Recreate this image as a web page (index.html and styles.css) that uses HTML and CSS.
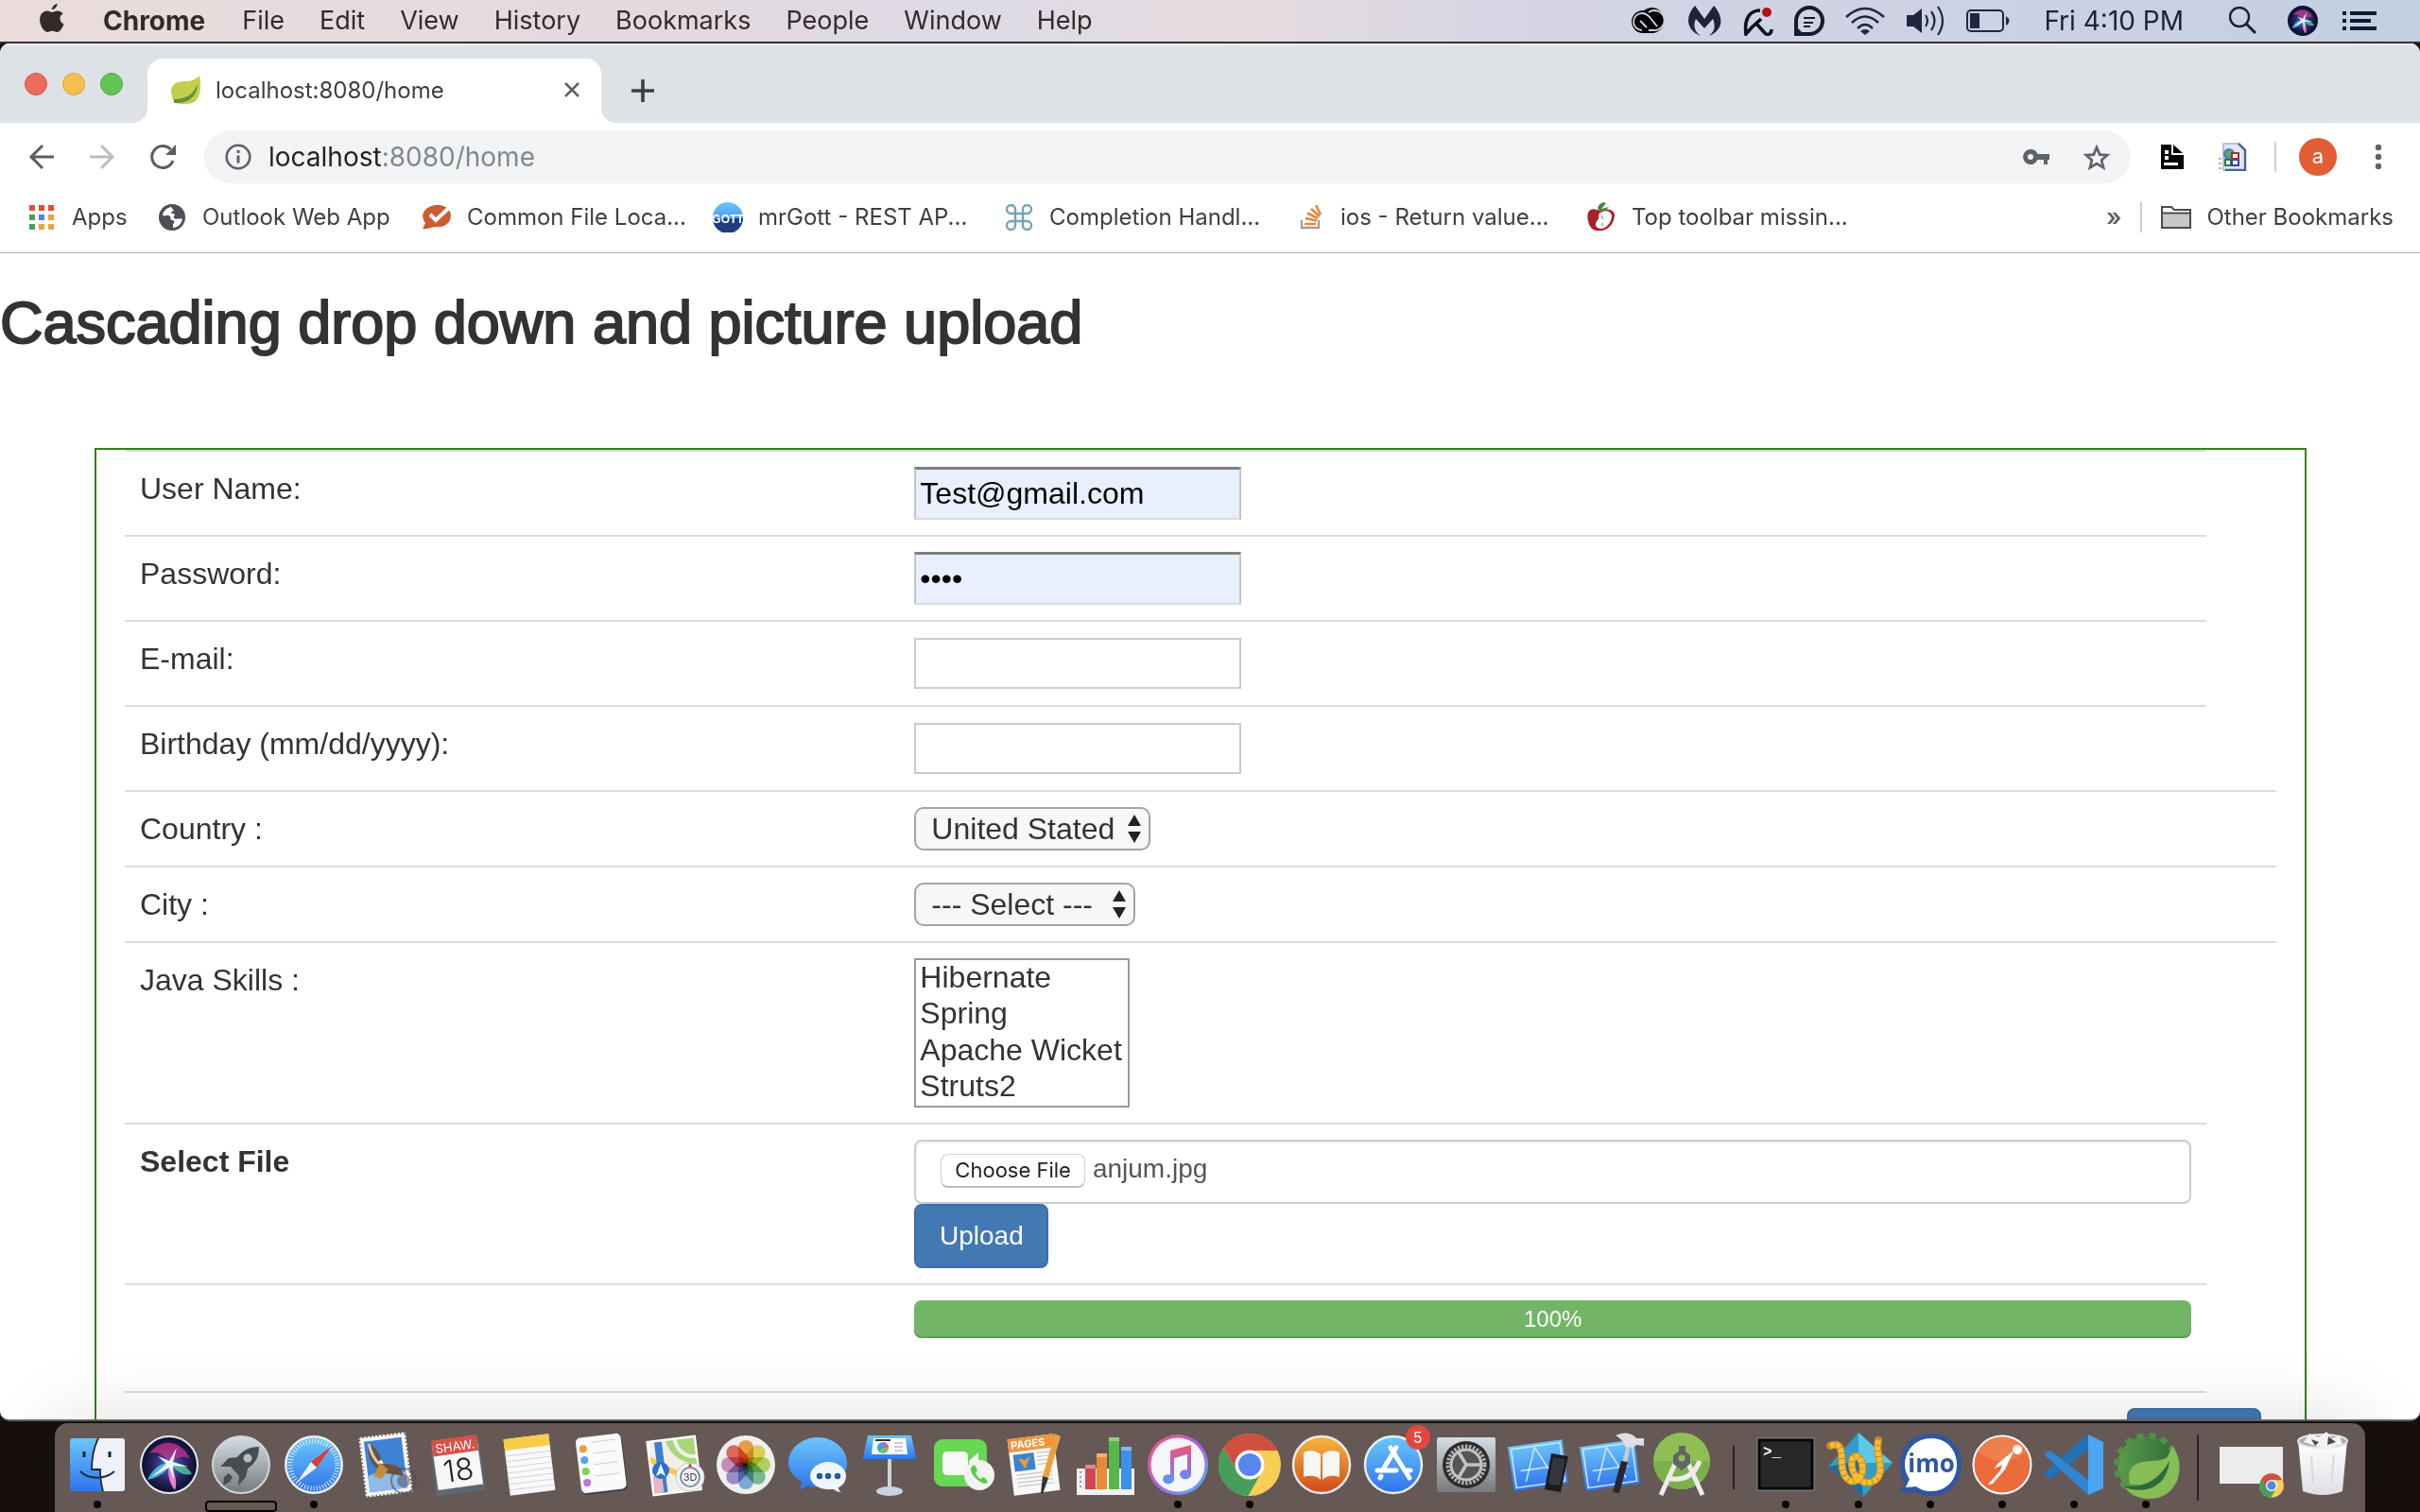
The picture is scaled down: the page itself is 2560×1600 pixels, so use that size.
FILE: index.html
```
<!DOCTYPE html>
<html lang="en">
<head>
<meta charset="utf-8">
<title>localhost:8080/home</title>
<link rel="stylesheet" href="styles.css">
</head>
<body>
<svg width="0" height="0" class="defs" aria-hidden="true">
  <defs>
    <symbol id="chrome-logo" viewBox="0 0 72 72">
      <circle cx="36" cy="36" r="33" fill="#f8ce55"/>
      <path d="M65.400 21A33 33 0 0 0 8.300 18L23 43.500 36 36V21z" fill="#d0503f"/>
      <path d="M8.300 18A33 33 0 0 0 34.300 69L49 43.500 36 36 23 43.500z" fill="#479e5c"/>
      <circle cx="36" cy="36" r="15.500" fill="#fff"/><circle cx="36" cy="36" r="12" fill="#5686ee"/>
    </symbol>
    <symbol id="siri-orb" viewBox="0 0 72 72">
      <circle cx="36" cy="36" r="31" fill="#e8e8ee"/>
      <circle cx="36" cy="36" r="29" fill="url(#siri-bg)"/>
      <path d="M15 24C26 8 48 8 58 30 48 24 42 30 37 36 32 28 26 20 15 24z" fill="#c8358e" opacity=".75"/>
      <path d="M13 52C18 40 28 33 37 34 34 44 24 50 13 52z" fill="#4fc8e8" opacity=".85"/>
      <path d="M37 34C48 34 56 38 60 46 50 48 42 42 37 34z" fill="#4ecf9f" opacity=".8"/>
      <path d="M36 34C42 44 45 54 42 63 35 54 34 44 36 34z" fill="#ee7fd0"/>
      <path d="M24 27L36 32 44 18 40 33 56 38 40 37 41 52 36 39 17 49 33 35z" fill="#e9fbff"/>
    </symbol>
    <radialGradient id="siri-bg"><stop offset="0" stop-color="#4a6fd8"/><stop offset=".6" stop-color="#2a2560"/><stop offset="1" stop-color="#0b1030"/></radialGradient>
    <linearGradient id="sky" x2="0" y2="1"><stop offset="0" stop-color="#6cc6fa"/><stop offset="1" stop-color="#2f74ec"/></linearGradient>
    <linearGradient id="steel" x2="0" y2="1"><stop offset="0" stop-color="#d3dfe4"/><stop offset="1" stop-color="#77797b"/></linearGradient>
    <linearGradient id="orange" x2="0" y2="1"><stop offset="0" stop-color="#f8b73c"/><stop offset="1" stop-color="#cf4a1e"/></linearGradient>
    <linearGradient id="paper" x2="0" y2="1"><stop offset="0" stop-color="#fff"/><stop offset="1" stop-color="#dfe0e4"/></linearGradient>
    <linearGradient id="tune" x2="1" y2="1"><stop offset="0" stop-color="#f25a66"/><stop offset=".5" stop-color="#b35be8"/><stop offset="1" stop-color="#3fc4f6"/></linearGradient>
    <linearGradient id="note" x2="0" y2="1"><stop offset="0" stop-color="#f0566a"/><stop offset=".6" stop-color="#9a6be8"/><stop offset="1" stop-color="#4aa0f2"/></linearGradient>
    <linearGradient id="leaf" x2="1" y2="0"><stop offset="0" stop-color="#5a9d4c"/><stop offset="1" stop-color="#2f6c39"/></linearGradient>
  </defs>
</svg>

<header class="menubar">
  <nav class="menus" aria-label="Application menu">
    <button class="menu apple" aria-label="Apple"><svg width="26" height="32" viewBox="0 0 26 32"><path fill="currentColor" d="M18.500 0c.300 2.400-2.300 6.300-5.600 6.200C12.600 3.500 15.500.500 18.500 0zM13 9c1.400 0 3-1.500 5.800-1.500 2.600.1 4.500 1.300 5.700 3-4.600 2.800-3.700 9 1 10.900-1.300 3.700-4.100 8.500-7 8.500-2 0-2.700-1.100-5.200-1.100s-3.400 1.100-5.200 1.100C4.600 29.900.200 22.900.100 17 .100 11 3.800 7.700 7.700 7.600 10 7.600 12 9 13 9z"/></svg></button>
    <button class="menu app-name">Chrome</button>
    <button class="menu">File</button>
    <button class="menu">Edit</button>
    <button class="menu">View</button>
    <button class="menu">History</button>
    <button class="menu">Bookmarks</button>
    <button class="menu">People</button>
    <button class="menu">Window</button>
    <button class="menu">Help</button>
  </nav>
  <div class="status">
    <svg width="38" height="28" viewBox="0 0 38 28"><path d="M13 27a12 12 0 1 1 2-24A13.500 13.500 0 1 1 25 27z" fill="#050507"/><path d="M13 24a9 9 0 1 1 0-18c4 0 6 2 8 4l8 10M18 21l-7-7" fill="none" stroke="#d3d4e4" stroke-width="1.800"/><path d="M20 5a10.500 10.500 0 1 1 5 19h-5" fill="none" stroke="#d3d4e4" stroke-width="1.800"/></svg>
    <svg width="38" height="32" viewBox="0 0 38 32"><path fill="#20233a" d="M9 0l10 14L29 0c11 12 10 26-5 32 6-5 7-11 4-18l-9 10-9-10c-3 7-2 13 5 18C0 26-2 12 9 0z"/></svg>
    <svg width="32" height="32" viewBox="0 0 32 32"><path d="M18 5C6 5 1 15 3 30l7-8M19 14L8 24M14 19l9 10c3 3 7 1 7-4" fill="none" stroke="#0d1020" stroke-width="3.600"/><circle cx="25" cy="7" r="5" fill="#b3120f"/></svg>
    <svg width="32" height="32" viewBox="0 0 32 32"><path d="M2 30V16A14 14 0 1 1 16 30z" fill="none" stroke="#141b2c" stroke-width="4"/><path d="M10 13h12M10 18h10M10 22h7" stroke="#141b2c" stroke-width="2"/><path d="M0 32V20l12 12z" fill="#141b2c"/></svg>
    <svg width="42" height="30" viewBox="0 0 42 30"><g fill="none" stroke="#1f2740" stroke-width="2.500"><path d="M1 11Q21-7 41 11"/><path d="M7 17Q21 4 35 17"/><path d="M13 23Q21 15 29 23"/></g><path d="M16 26q5-4 10 0l-5 4z" fill="#1f2740"/></svg>
    <svg width="42" height="32" viewBox="0 0 42 32"><path d="M1 10h7l9-7v26l-9-7H1z" fill="#1f2740"/><path d="M21 10q4 6 0 12M27 6q7 10 0 20M34 1q10 15 0 30" fill="none" stroke="#1f2740" stroke-width="2.200"/></svg>
    <svg width="46" height="24" viewBox="0 0 46 24"><rect x="1" y="1" width="38" height="22" rx="4" fill="none" stroke="#1f2740" stroke-width="2"/><path d="M4 4h10v16H4z" fill="#1f2740"/><path d="M42 7q7 5 0 10z" fill="#1f2740"/></svg>
  </div>
  <time class="clock">Fri 4:10 PM</time>
  <div class="status corner">
    <svg width="36" height="30" viewBox="0 0 36 30"><circle cx="11" cy="11" r="10" fill="none" stroke="#17203a" stroke-width="2.400"/><path d="M18 18l10 10" stroke="#17203a" stroke-width="3"/></svg>
    <svg width="32" height="32" viewBox="4 4 64 64"><use href="#siri-orb" width="72" height="72"/><circle cx="36" cy="36" r="29.500" fill="none" stroke="#0c1230" stroke-width="5"/></svg>
    <svg width="36" height="20" viewBox="0 0 36 20"><path d="M0 2h4M8 2h28M0 10h4M8 10h22M0 18h4M8 18h28" stroke="#101a30" stroke-width="4"/></svg>
  </div>
</header>

<section class="window">
  <div class="tabstrip">
    <div class="lights"><button class="light red" aria-label="Close window"></button><button class="light amber" aria-label="Minimize"></button><button class="light green" aria-label="Zoom"></button></div>
    <div class="tab">
      <svg width="32" height="32" viewBox="0 0 32 32"><path d="M31 1c3 16 0 30-13 30-5 1-9-1-13-1C-2 17 0 8 14 7c9 0 13-2 17-6z" fill="#c3cf4a"/><path d="M4 26C17 26 24 21 29 10 29 22 20 31 4 30z" fill="#5f9440"/></svg>
      <span class="tab-title">localhost:8080/home</span>
      <button class="icon-button close" aria-label="Close tab"><svg width="18" height="18" viewBox="0 0 18 18"><path d="M2 2l14 14M16 2L2 16" stroke="#5f6368" stroke-width="2.600"/></svg></button>
    </div>
    <button class="icon-button new-tab" aria-label="New tab"><svg width="26" height="26" viewBox="0 0 26 26"><path d="M13 1v24M1 13h24" stroke="#3c4043" stroke-width="3.600"/></svg></button>
  </div>

  <div class="toolbar">
    <button class="icon-button" aria-label="Back"><svg width="28" height="28" viewBox="0 0 28 28"><path d="M27 14H3M15 2L3 14l12 12" fill="none" stroke="#5a5e63" stroke-width="3"/></svg></button>
    <button class="icon-button" aria-label="Forward"><svg width="28" height="28" viewBox="0 0 28 28"><path d="M1 14h24M13 2l12 12-12 12" fill="none" stroke="#bbbdbf" stroke-width="3"/></svg></button>
    <button class="icon-button" aria-label="Reload"><svg width="28" height="28" viewBox="0 0 28 28"><path d="M25 18A11.500 11.500 0 1 1 22.500 6" fill="none" stroke="#5a5e63" stroke-width="3"/><path d="M28 1v11H17z" fill="#5a5e63"/></svg></button>
    <div class="omnibox">
      <svg width="28" height="28" viewBox="0 0 28 28"><circle cx="14" cy="14" r="12.300" fill="none" stroke="#5f6368" stroke-width="2.600"/><path d="M14 7v3M14 12.500v8" stroke="#5f6368" stroke-width="3"/></svg>
      <input class="url" type="text" value="localhost:8080/home" aria-label="Address">
      <button class="icon-button" aria-label="Saved passwords"><svg width="28" height="18" viewBox="0 0 28 18"><path d="M8 1a8 8 0 1 0 7.500 11H22v5h4v-5h2V6H15.500A8 8 0 0 0 8 1zm0 5a3 3 0 1 1 0 6 3 3 0 0 1 0-6z" fill="#5f6368" fill-rule="evenodd"/></svg></button>
      <button class="icon-button" aria-label="Bookmark this page"><svg width="30" height="28" viewBox="0 0 30 28"><path d="M15 4l3.200 7.600 8 .6-6.100 5.200 2 8L15 21l-7.100 4.400 2-8-6.100-5.200 8-.6z" fill="none" stroke="#5f6368" stroke-width="2.700"/></svg></button>
    </div>
    <button class="icon-button" aria-label="Page extension"><svg width="24" height="26" viewBox="0 0 24 26"><path d="M0 0h11v11h13v15H0z" fill="#000"/><path d="M13 0l10 9H13z" fill="#000"/><path d="M4 6h4v4H4zM4 12h4v4H4zM3 19h15v3H3z" fill="#fff"/></svg></button>
    <button class="icon-button" aria-label="Web extension"><svg width="30" height="30" viewBox="0 0 30 30"><path d="M5 1h17l6 6v22H5z" fill="#dfe8f6" stroke="#9fb3d0" stroke-width="1.500"/><path d="M21 1l7 7v21H7" fill="none" stroke="#45658f" stroke-width="2.400"/><circle cx="11" cy="12" r="6" fill="#3b7dd0"/><path d="M6 10l5 7 5-10z" fill="#55b34a"/><path d="M7 18h6v6H7z" fill="#fff" stroke="#2f7d3c" stroke-width="2"/><path d="M14 18h7v6h-7z" fill="#fff" stroke="#3c3f9d" stroke-width="2"/><path d="M14 11h7v6h-7z" fill="#fff" stroke="#a82c38" stroke-width="2"/><path d="M0 17h3M0 22h3M0 27h3" stroke="#b9b67d" stroke-width="2"/></svg></button>
    <span class="divider"></span>
    <button class="icon-button" aria-label="Profile"><span class="avatar">a</span></button>
    <button class="icon-button" aria-label="More"><svg width="8" height="28" viewBox="0 0 8 28"><g fill="#5f6368"><circle cx="4" cy="4" r="3.200"/><circle cx="4" cy="14" r="3.200"/><circle cx="4" cy="24" r="3.200"/></g></svg></button>
  </div>

  <nav class="bookmarks" aria-label="Bookmarks">
    <a class="bookmark" href="#"><svg width="34" height="26" viewBox="-4 0 34 26"><path d="M1 0h6v6H1zM11 0h6v6h-6zM21 0h6v6h-6z" fill="#e44b3f"/><path d="M1 10h6v6H1zM1 20h6v6H1z" fill="#529b5c"/><path d="M11 10h6v6h-6z" fill="#4587f0"/><path d="M21 10h6v6h-6zM11 20h6v6h-6zM21 20h6v6h-6z" fill="#e7a53c"/></svg>Apps</a>
    <a class="bookmark" href="#"><svg width="32" height="28" viewBox="0 0 32 28"><circle cx="16" cy="14" r="14" fill="#4c4f55"/><path d="M15 3c-5 1-9 5-9 9 3 1 6-1 8 1 1 2-1 3 2 4 3 0 3 3 1 4v4c5 0 9-4 10-9-2-2-6 1-9-1-1-2 2-4 0-5-4 1-3-3 0-3z" fill="#fff"/></svg>Outlook Web App</a>
    <a class="bookmark" href="#"><svg width="32" height="26" viewBox="0 0 32 26"><path d="M15 0c8-1 16 4 16 11 0 8-7 13-15 12-5 0-8 3-15 2l3-6C-3 10 4 1 15 0z" fill="#cb5d33"/><path d="M9 10l6 6L31 1" fill="none" stroke="#fff" stroke-width="4"/></svg>Common File Loca...</a>
    <a class="bookmark" href="#"><svg width="32" height="32" viewBox="0 0 32 32"><circle cx="16" cy="16" r="16" fill="url(#sky)"/><path d="M0 17h32a16 16 0 0 1-32 0z" fill="#1f3f7c"/><text x="16" y="22" class="gott" text-anchor="middle">GOTT</text></svg>mrGott - REST AP...</a>
    <a class="bookmark" href="#"><svg width="32" height="28" viewBox="0 0 32 28"><path d="M12 9v10M20 9v10M11 10h10M11 18h10M12 10V5.500a4.500 4.500 0 1 0-4.500 4.500H12M20 10V5.500a4.500 4.500 0 1 1 4.500 4.500H20M12 18v4.500A4.500 4.500 0 1 1 7.500 18H12M20 18v4.500a4.500 4.500 0 1 0 4.500-4.500H20" fill="none" stroke="#76a3b7" stroke-width="2.400"/></svg>Completion Handl...</a>
    <a class="bookmark" href="#"><svg width="32" height="26" viewBox="0 0 32 26"><path d="M7 16v8h18v-8" fill="none" stroke="#9c9ea1" stroke-width="2.400"/><path d="M10 20h12M11 14l12 2.500M13 8.500l11 5.500M17 4l9 8M22 0l5 10" stroke="#e8853c" stroke-width="2.600"/></svg>ios - Return value...</a>
    <a class="bookmark" href="#"><svg width="32" height="32" viewBox="0 0 32 32"><path d="M11 8C3 5 0 12 2 20s6 10 10 10c8 1 17-4 18-16 0-4-4-7-9-6-3 0-6 1-10 0z" fill="#a82226"/><path d="M15 11c5-3 11-2 12 3 0 7-5 13-11 14-6 0-8-5-4-9 3-3-1-5 3-8z" fill="#fff"/><path d="M12 7c1-6 6-8 9-6l-5 6 8-2c-2 4-8 5-12 2z" fill="#3c8a3e"/><path d="M17 14v4M17 22v3" stroke="#bbb" stroke-width="2"/></svg>Top toolbar missin...</a>
    <span></span>
    <button class="more" aria-label="More bookmarks">»</button>
    <a class="bookmark other" href="#"><svg width="32" height="26" viewBox="0 0 32 26"><path d="M1 24V2h10l3 3h17v19z" fill="#fff" stroke="#4b4b4b" stroke-width="2"/><path d="M1 8.500h30V24H1z" fill="#c8c8c8" stroke="#4b4b4b" stroke-width="2"/></svg>Other Bookmarks</a>
  </nav>

  <main class="page">
    <h1>Cascading drop down and picture upload</h1>
    <form class="panel" onsubmit="return false">
      <table>
        <colgroup><col class="col-label"><col><col class="col-end"></colgroup>
        <tr><td><label for="user">User Name:</label></td><td><input class="field filled" id="user" type="text" value="Test@gmail.com"></td></tr>
        <tr><td><label for="pass">Password:</label></td><td><input class="field filled" id="pass" type="password" value="test"></td></tr>
        <tr><td><label for="mail">E-mail:</label></td><td><input class="field" id="mail" type="text"></td></tr>
        <tr><td><label for="bday">Birthday (mm/dd/yyyy):</label></td><td><input class="field" id="bday" type="text"></td></tr>
        <tr><td><label for="country">Country :</label></td><td><span class="picker"><select id="country" class="country"><option>United Stated</option></select><svg class="arrows" width="16" height="30" viewBox="0 0 16 30"><path d="M8 0l7 12H1zM8 30l7-12H1z" fill="#222"/></svg></span></td><td></td></tr>
        <tr><td><label for="city">City :</label></td><td><span class="picker"><select id="city" class="city"><option>--- Select ---</option></select><svg class="arrows" width="16" height="30" viewBox="0 0 16 30"><path d="M8 0l7 12H1zM8 30l7-12H1z" fill="#222"/></svg></span></td><td></td></tr>
        <tr><td><label for="skills">Java Skills :</label></td><td><select id="skills" class="skills" multiple size="4"><option>Hibernate</option><option>Spring</option><option>Apache Wicket</option><option>Struts2</option></select></td><td></td></tr>
        <tr><td><label for="file" class="strong">Select File</label></td><td><input class="file" id="file" type="file"><button class="primary" type="button">Upload</button></td></tr>
        <tr class="last"><td></td><td><div class="progress" role="progressbar" aria-valuenow="100">100%</div></td></tr>
        <tr class="actions"><td colspan="3"><button class="primary submit" aria-label="Submit"></button></td></tr>
      </table>
    </form>
  </main>
</section>

<footer class="dock">
  <div class="app on"><svg viewBox="0 0 72 72"><rect x="7" y="8" width="58" height="56" rx="3" fill="url(#sky)"/><path d="M37 8h25a3 3 0 0 1 3 3v50a3 3 0 0 1-3 3H42c-2-6-2-12-2-16l-1-7h-9c0-12 2-23 7-33z" fill="#eef1f6"/><path d="M22 22v6M49 22v6" stroke="#16222e" stroke-width="3"/><path d="M18 43c9 9 26 9 36 0M37 8c-5 10-7 21-7 33h9c0 8 1 16 3 23" fill="none" stroke="#1a2a3c" stroke-width="1.800"/></svg></div>
  <div class="app"><svg viewBox="0 0 72 72"><use href="#siri-orb"/></svg></div>
  <div class="app launch"><svg viewBox="0 0 72 72"><circle cx="36" cy="36" r="30" fill="url(#steel)" stroke="#cfd5d8" stroke-width="2"/><path d="M55 17c-11 0-17 4-23 11l-9 1-9 9 11 0 9 10-1 10 8-9 2-9c8-6 12-12 12-23zM23 45l-5 4-1 9 7-4 3-5z" fill="#474c50"/><circle cx="43" cy="29" r="4.500" fill="#b5bdc1"/></svg></div>
  <div class="app on"><svg viewBox="0 0 72 72"><circle cx="36" cy="36" r="31" fill="#eceff1"/><circle cx="36" cy="36" r="28.500" fill="url(#sky)"/><circle cx="36" cy="36" r="25" fill="none" stroke="#e8f3fc" stroke-width="5" stroke-dasharray="1 2.200"/><path d="M55 16L33 33l6 6z" fill="#de3b32"/><path d="M18 55l15-22 6 6z" fill="#f1f1f1"/></svg></div>
  <div class="app"><svg viewBox="0 0 72 72"><g transform="rotate(-7 36 36)"><path d="M11 4h50v64H11z" fill="#f7f7f7"/><path d="M11 4h50v64H11z" fill="none" stroke="#655855" stroke-width="3" stroke-dasharray="1.500 2.500"/><path d="M16 9h40v54H16z" fill="#3f82d4"/><path d="M16 46c10-5 26-2 40 0v17H16z" fill="#8fbbe6"/><path d="M21 12c-4 10-1 20 6 27l8 6 18 5c1-7-4-12-12-14l-9-2c0-10-4-18-11-22z" fill="#6b5340"/><path d="M21 12c1 10 4 17 8 22" fill="none" stroke="#d9cbb8" stroke-width="3"/><path d="M30 33l-8 14 8 3 8-9z" fill="#c98a35"/><path d="M28 33l4-3 2 5z" fill="#fff"/></g><circle cx="55" cy="53" r="13" fill="none" stroke="#4d4a58" stroke-width="2" opacity=".6"/><circle cx="55" cy="53" r="7" fill="#4d4a58" opacity=".5"/></svg></div>
  <div class="app"><svg viewBox="0 0 72 72"><g transform="rotate(-8 36 36)"><path d="M10 14h52v52H9z" fill="#5c6972"/><path d="M12 10h48v50H12z" fill="#f7f7f7"/><path d="M12 7h48v17H12z" fill="#da4f48"/><text x="36" y="21" class="cal-month" text-anchor="middle">SHAW.</text><text x="36" y="53" class="cal-day" text-anchor="middle">18</text></g></svg></div>
  <div class="app"><svg viewBox="0 0 72 72"><g transform="rotate(-7 36 36)"><path d="M12 6h48v60H12z" fill="#fafafa"/><path d="M12 6h48v12H12z" fill="#f8cd45"/><path d="M12 24h48M12 30h48M12 36h48M12 42h48M12 48h48M12 54h48M12 60h48" stroke="#d3d3d3"/></g></svg></div>
  <div class="app"><svg viewBox="0 0 72 72"><g transform="rotate(-7 36 36)"><rect x="13" y="7" width="48" height="59" rx="5" fill="#3e4349"/><rect x="12" y="5" width="48" height="59" rx="5" fill="#fafafa"/><circle cx="19" cy="17" r="4" fill="#f09a38"/><circle cx="19" cy="29" r="4" fill="#4aa7f0"/><circle cx="19" cy="41" r="4" fill="#79d354"/><circle cx="19" cy="53" r="4" fill="#bd74d8"/><path d="M29 11h25M29 23h25M29 35h25M29 47h25" stroke="#cfcfcf"/></g></svg></div>
  <div class="app"><svg viewBox="0 0 72 72"><g transform="rotate(-7 36 36)"><path d="M11 9h50v56H11z" fill="#f2efe9" stroke="#fff" stroke-width="3"/><path d="M30 10h30v28Q36 34 30 10z" fill="#a6d77b"/><path d="M40 10q2 18 20 20" fill="none" stroke="#f2efe9" stroke-width="4"/><path d="M12 24l15 12 30 16v9L12 32z" fill="#f5c94a"/><path d="M18 10h8v54h-8z" fill="#3a80d2"/><path d="M12 46h10v18H12z" fill="#eab6bf"/></g><circle cx="22" cy="42" r="9" fill="#2772cc"/><path d="M22 35l5 13-5-3-5 3z" fill="#fff"/><circle cx="53" cy="49" r="15" fill="#f2f2f2" stroke="#c9c9c9"/><circle cx="53" cy="49" r="10" fill="none" stroke="#5b7f98" stroke-width="1.500"/><text x="53" y="53" class="three-d" text-anchor="middle">3D</text><path d="M53 34l2 4h-4z" fill="#d33"/></svg></div>
  <div class="app"><svg viewBox="0 0 72 72"><circle cx="36" cy="36" r="31" fill="#efefef"/><g class="petals"><rect x="28" y="10" width="16" height="27" rx="8" fill="#f0a13c"/><rect x="28" y="10" width="16" height="27" rx="8" fill="#e8da47" transform="rotate(45 36 36)"/><rect x="28" y="10" width="16" height="27" rx="8" fill="#b5d65c" transform="rotate(90 36 36)"/><rect x="28" y="10" width="16" height="27" rx="8" fill="#74c08c" transform="rotate(135 36 36)"/><rect x="28" y="10" width="16" height="27" rx="8" fill="#76acdf" transform="rotate(180 36 36)"/><rect x="28" y="10" width="16" height="27" rx="8" fill="#9a8ccb" transform="rotate(225 36 36)"/><rect x="28" y="10" width="16" height="27" rx="8" fill="#cb8cb9" transform="rotate(270 36 36)"/><rect x="28" y="10" width="16" height="27" rx="8" fill="#e8604e" transform="rotate(315 36 36)"/></g></svg></div>
  <div class="app"><svg viewBox="0 0 72 72"><path d="M36 7c17 0 31 12 31 27S53 60 36 60c-4 0-8-1-11-2-3 3-6 4-9 4 2-2 3-5 3-8C10 49 5 42 5 34 5 19 19 7 36 7z" fill="url(#sky)"/><path d="M47 33c11 0 19 7 19 15 0 5-3 10-8 12 0 2 1 4 3 5-3 0-6-1-8-3h-6c-10 0-19-6-19-14s9-15 19-15z" fill="#eef5fb"/><g fill="#2559a0"><circle cx="38" cy="48" r="3.200"/><circle cx="47" cy="48" r="3.200"/><circle cx="57" cy="48" r="3.200"/></g></svg></div>
  <div class="app"><svg viewBox="0 0 72 72"><path d="M34 30h4v34h-4z" fill="#cfd4da"/><ellipse cx="36" cy="64" rx="14" ry="5" fill="#c9d3e2"/><path d="M13 5h46l5 23v2H8v-2z" fill="url(#sky)"/><path d="M19 8h34l2 17H17z" fill="#fff"/><path d="M21 10h16" stroke="#333" stroke-width="2"/><circle cx="29" cy="18" r="6" fill="#39a7de"/><path d="M29 18v-6a6 6 0 0 1 6 6z" fill="#d95bb2"/><path d="M29 18h6a6 6 0 0 1-10 4z" fill="#79c44c"/><path d="M41 13h9M41 17h9M41 21h9" stroke="#bbc" stroke-width="1.500"/></svg></div>
  <div class="app"><svg viewBox="0 0 72 72"><rect x="7" y="9" width="56" height="50" rx="9" fill="#66d852"/><rect x="16" y="22" width="27" height="25" rx="5" fill="#f7f9f7"/><path d="M44 32l10-9v22H44z" fill="#f7f9f7"/><circle cx="55" cy="47" r="16" fill="#f0f3ef"/><path d="M47 38c-3 3 1 10 6 14s9 5 11 2l-4-5-4 2c-3-2-4-4-5-7l2-2-3-6z" fill="#58cc48"/></svg></div>
  <div class="app"><svg viewBox="0 0 72 72"><g transform="rotate(-7 36 36)"><path d="M11 6h49v60H11z" fill="#f8f8f8"/><path d="M11 6h49v14H11z" fill="#f0953a"/><text x="14" y="17" class="pages">PAGES</text><path d="M15 23h22v18H15z" fill="#3d83cf"/><path d="M20 27l6 12 7-13-6 4z" fill="#f29a2e"/><path d="M40 24h16M40 28h16M40 32h16M40 36h16M16 45h38M16 49h38M16 53h38M16 57h38" stroke="#bbb"/></g><path d="M58 3l6 3-13 44-6-2z" fill="#eaa13a"/><path d="M45 48l6 2-6 17-2-1z" fill="#333"/></svg></div>
  <div class="app"><svg viewBox="0 0 72 72"><path d="M5 40h61v28H5z" fill="#f1f1f1"/><path d="M9 43v20" stroke="#999" stroke-width="2" stroke-dasharray="2 3"/><path d="M14 36h11v26H14z" fill="#d44552"/><path d="M26 24h11v38H26z" fill="#ea8a36"/><path d="M39 7h11v55H39z" fill="#56b947"/><path d="M52 17h11v45H52z" fill="#3c91ee"/><path d="M14 36h11v4H14zM26 24h11v4H26zM39 7h11v4H39zM52 17h11v4H52z" fill="#fff" opacity=".35"/></svg></div>
  <div class="app on"><svg viewBox="0 0 72 72"><circle cx="36" cy="36" r="32" fill="url(#tune)"/><circle cx="36" cy="36" r="28.500" fill="#f6f5fa"/><path d="M28 21l22-6v31a6 5 0 1 1-4-4.500V25l-14 4v22a6 5 0 1 1-4-4.500z" fill="url(#note)"/></svg></div>
  <div class="app on"><svg viewBox="0 0 72 72"><use href="#chrome-logo"/></svg></div>
  <div class="app"><svg viewBox="0 0 72 72"><circle cx="36" cy="36" r="30" fill="url(#orange)" stroke="#eceae8" stroke-width="2.500"/><path d="M35 25c-4-4-12-5-18-2v26c6-2 14-2 18 3zM37 25c4-4 12-5 18-2v26c-6-2-14-2-18 3z" fill="#f8f6f3"/></svg></div>
  <div class="app"><svg viewBox="0 0 72 72"><circle cx="36" cy="36" r="30" fill="url(#sky)" stroke="#e9eef3" stroke-width="2.500"/><path d="M39 18L25 41M33 18l20 32M19 42h20M48 42h6M23 48l-1 2" stroke="#fff" stroke-width="5" stroke-linecap="round"/></svg><span class="badge">5</span></div>
  <div class="app"><svg viewBox="0 0 72 72"><rect x="5" y="7" width="62" height="58" rx="2" fill="url(#steel)"/><circle cx="36" cy="36" r="25" fill="#2c2c2e"/><circle cx="36" cy="36" r="19.500" fill="none" stroke="#b2b2b2" stroke-width="4" stroke-dasharray="2.500 1.600"/><circle cx="36" cy="36" r="16" fill="#555" stroke="#c3c3c3" stroke-width="3"/><path d="M36 36h17M36 36l-9-15M36 36l-9 15" stroke="#c3c3c3" stroke-width="3.500"/></svg></div>
  <div class="app"><svg viewBox="0 0 72 72"><g transform="rotate(-8 36 36)"><path d="M7 13h58v47H7z" fill="url(#sky)"/><path d="M10 16h52v41H10zM35 17L21 52M35 17l16 35M17 40h38" fill="none" stroke="#cfe8fb" stroke-width="1.500"/></g><path d="M50 24l18 3-8 38-17-3z" fill="#1b1c20"/><path d="M52 28l13 2-6 28-12-2z" fill="#33363d"/></svg></div>
  <div class="app"><svg viewBox="0 0 72 72"><g transform="rotate(-8 36 36)"><path d="M7 13h58v47H7z" fill="url(#sky)"/><path d="M10 16h52v41H10zM35 17L21 52M35 17l16 35M17 40h38" fill="none" stroke="#cfe8fb" stroke-width="1.500"/></g><path d="M54 14l4 1-4 20-5-1z" fill="#c6cbd1"/><path d="M48 32l7 1-9 33-7-1z" fill="#26282c"/><path d="M42 5c9-4 15-3 20 1l2 2 8 0v8l-8-1-4 3-8-1c-1-6-5-9-10-12z" fill="#dde1e6"/></svg></div>
  <div class="app"><svg viewBox="0 0 72 72"><circle cx="36" cy="32" r="30" fill="#8fbe55"/><path d="M6 32a30 30 0 0 0 60 0z" fill="#7db04a"/><path d="M33 26L14 68M39 26l19 42" stroke="#ececec" stroke-width="5"/><path d="M20 50q26 6 35-18" fill="none" stroke="#ececec" stroke-width="5"/><path d="M33 16h7v6l5 4v9l-9 7-9-7v-9l6-4z" fill="#5f6569"/><circle cx="36" cy="29" r="3.500" fill="#8fbe55"/></svg></div>
  <span class="rule short"></span>
  <div class="app on"><svg viewBox="0 0 72 72"><path d="M6 8h60v55H6z" fill="#262829" stroke="#7c8587" stroke-width="1.500"/><path d="M8 10h56v51H8z" fill="none" stroke="#0a0a0a" stroke-width="3"/><text x="12" y="27" class="prompt">&gt;_</text></svg></div>
  <div class="app on"><svg viewBox="0 0 72 72"><path d="M36 2l36 32-31 36L4 38z" fill="#2f9dc9"/><path d="M36 2l36 32H36z" fill="#58c9e8"/><path d="M4 38l32-6 5 38z" fill="#1d6d9b"/><path d="M6 16c16-6 11 14 13 24s9 18 17 11 4-24-3-24-5 19 4 25 21 2 22-10-5-20-2-32" fill="none" stroke="#c98a1c" stroke-width="8" stroke-linecap="round"/><path d="M6 16c16-6 11 14 13 24s9 18 17 11 4-24-3-24-5 19 4 25 21 2 22-10-5-20-2-32" fill="none" stroke="#f6bd38" stroke-width="6" stroke-dasharray="5 1"/></svg></div>
  <div class="app on"><svg viewBox="0 0 72 72"><path d="M37 3c19 0 32 14 32 33S56 69 37 69c-6 0-12-1-17-4-6 1-11 1-17-1 3-2 6-5 6-9-3-5-5-11-5-19C4 17 18 3 37 3z" fill="#2f57a2"/><path d="M37 8c16 0 27 12 27 28S53 64 37 64c-7 0-12-2-16-5l-11 1 4-9c-3-4-5-9-5-15C9 20 21 8 37 8z" fill="#fff"/><text x="37" y="44" class="imo" text-anchor="middle">imo</text></svg></div>
  <div class="app on"><svg viewBox="0 0 72 72"><circle cx="36" cy="36" r="30.500" fill="#ec6b3c" stroke="#fff" stroke-width="2"/><path d="M10 22a30 30 0 0 1 52 0q-26 20-52 0z" fill="#f08e56" opacity=".6"/><circle cx="52" cy="20" r="5" fill="#fff"/><path d="M47 22L31 35l-3 5 8-4-2 6-13 15 5-1 13-15 8-17z" fill="#fff"/></svg></div>
  <div class="app on"><svg viewBox="0 0 72 72"><path d="M4 45l7 7 42-34-2-14z" fill="#2272ba"/><path d="M51 4l16 8v49l-16 7z" fill="#4aa6f0"/><path d="M4 25l7-4 40 31v16z" fill="#2e86d4"/></svg></div>
  <div class="app on"><svg viewBox="0 0 72 72"><circle cx="37" cy="37" r="31" fill="url(#leaf)"/><circle cx="37" cy="37" r="32" fill="none" stroke="#4f9145" stroke-width="6" stroke-dasharray="7 6" stroke-dashoffset="3"/><path d="M64 16c16 22 6 56-24 56-12 0-18-4-26-11 20-4 34-6 50-45z" fill="#86bd55"/><path d="M60 34c0 18-14 24-41 23-5-22 10-24 22-25 8 0 14-1 22-6z" fill="#86bd55"/><path d="M14 59c22 1 36-8 47-27-3 26-22 35-45 29z" fill="#2f6c39"/></svg></div>
  <span class="rule"></span>
  <div class="app"><svg viewBox="0 0 72 72"><path d="M3 17h67v39H3z" fill="#ececec"/><use href="#chrome-logo" x="44" y="44" width="28" height="28"/></svg></div>
  <div class="app"><svg viewBox="0 0 72 72"><path d="M10 10h52l-5 54q-21 8-42 0z" fill="url(#paper)"/><ellipse cx="36" cy="11" rx="26" ry="7" fill="#a9abad" stroke="#e7e7e7" stroke-width="2"/><path d="M16 12l6-9 10 4 8-6 6 7 8-2 3 8-19 5z" fill="#f3f3f3"/><path d="M24 9l8 3-4 4zM42 6l8 6-9 3z" fill="#474b55"/><path d="M24 26l2 30M48 26l-3 30" stroke="#d8d9db" stroke-width="2"/></svg></div>
</footer>
<script src="script.js"></script>
</body>
</html>
```
FILE: styles.css
```
* { box-sizing: border-box; }

body {
  margin: 0;
  height: 100vh;
  display: flex;
  flex-direction: column;
  overflow: hidden;
  background: #17100f;
  font-family: Inter, "Liberation Sans", sans-serif;
}

.defs { position: absolute; }
svg { display: block; flex: none; }
button { border: 0; padding: 0; background: none; font: inherit; color: inherit; }

/* Menu bar */
.menubar {
  height: 46px;
  flex: none;
  display: flex;
  align-items: center;
  padding: 0 46px 0 42px;
  border-bottom: 2px solid #33303a;
  background: linear-gradient(90deg, #eadcdb 0%, #e3d9df 28%, #dddae6 40%, #e6dcdf 51%, #d4d4e4 64%, #c4cfe2 100%);
  font-size: 28px;
  line-height: 44px;
  color: #352a2a;
}
.menus { display: flex; align-items: center; gap: 37px; margin-right: auto; }
.menu { font-size: 27px; }
.menu.apple { margin: 0 4px 4px 0; }
.menu.app-name { margin-right: 2px; font-size: 28px; font-weight: 700; }
.status { display: flex; align-items: center; gap: 22px; }
.status.corner { gap: 26px; }
.clock { margin: 0 48px 0 36px; color: #1b2233; }

/* Browser window */
.window {
  flex: 1;
  min-height: 0;
  display: flex;
  flex-direction: column;
  overflow: hidden;
  border-radius: 10px;
  background: #fff;
  border-bottom: 2px solid #666;
}
.tabstrip {
  height: 84px;
  flex: none;
  display: flex;
  align-items: flex-end;
  background: #dee1e6;
  border-top: 2px solid #eef0f2;
}
.lights { display: flex; gap: 16px; width: 156px; padding: 0 0 29px 26px; }
.light { width: 24px; height: 24px; border-radius: 50%; border: 1px solid #d55046; background: #ed6a5e; }
.light.amber { background: #f5bf4f; border-color: #d6a243; }
.light.green { background: #61c554; border-color: #4fa73f; }
.tab {
  position: relative;
  width: 480px;
  height: 68px;
  display: flex;
  align-items: center;
  padding: 0 22px 2px 24px;
  gap: 16px;
  border-radius: 16px 16px 0 0;
  background: #fff;
  font-size: 24px;
  color: #3c4043;
}
.tab::before, .tab::after {
  content: "";
  position: absolute;
  bottom: 0;
  width: 16px;
  height: 16px;
}
.tab::before { left: -16px; background: radial-gradient(circle at 0 0, #dee1e6 16px, #fff 16px); }
.tab::after { right: -16px; background: radial-gradient(circle at 100% 0, #dee1e6 16px, #fff 16px); }
.tab-title { flex: 1; }
.icon-button {
  flex: none;
  width: 64px;
  height: 56px;
  display: flex;
  align-items: center;
  justify-content: center;
}
.icon-button.close { width: 18px; }
.icon-button.new-tab { width: 56px; height: 68px; margin-left: 16px; }

.toolbar {
  height: 68px;
  flex: none;
  display: flex;
  align-items: flex-start;
  padding: 8px 12px 0;
}
.omnibox {
  flex: 1;
  display: flex;
  align-items: center;
  height: 56px;
  margin: 0 12px;
  padding: 0 4px 0 22px;
  border-radius: 28px;
  background: #f1f3f4;
}
.url {
  flex: 1;
  min-width: 0;
  height: 56px;
  margin-left: 18px;
  padding: 0;
  border: 0;
  outline: 0;
  font: 28px Inter, sans-serif;
  color: transparent;
  background: linear-gradient(90deg, #202124 119px, #80868b 119px);
  -webkit-background-clip: text;
  background-clip: text;
}
.divider { width: 2px; height: 32px; margin: 12px; background: #cfcfcf; }
.avatar {
  width: 40px;
  height: 40px;
  border-radius: 50%;
  background: #e35c33;
  color: #fff;
  font-size: 22px;
  line-height: 38px;
  text-align: center;
}

.bookmarks {
  flex: none;
  display: grid;
  grid-template-columns: 140px 280px repeat(5, 308px) 1fr auto auto;
  align-items: center;
  height: 70px;
  padding: 0 28px 6px 26px;
  border-bottom: 1px solid #b0b0b0;
  font-size: 24px;
  line-height: 32px;
  color: #3c4043;
}
.bookmark {
  display: flex;
  align-items: center;
  gap: 16px;
  color: inherit;
  text-decoration: none;
  white-space: nowrap;
}
.more { margin-right: 20px; font-size: 26px; font-weight: 600; color: #5f6368; }
.other { height: 32px; padding-left: 20px; border-left: 2px solid #cfcfcf; }
.gott { font: 700 12px "Liberation Sans", sans-serif; fill: #fff; }

/* Page */
.page {
  flex: 1;
  min-height: 0;
  overflow: hidden;
  color: #333;
  font-family: "Liberation Sans", Arial, sans-serif;
  font-size: 32px;
  line-height: 44px;
}
h1 {
  margin: 37px 0 97px;
  font-size: 63px;
  font-weight: 400;
  line-height: 72px;
  -webkit-text-stroke: 2px #333;
}
.panel {
  margin: 0 120px 0 100px;
  padding: 0 30px 40px;
  border: 2px solid #377e22;
}
table { width: 100%; table-layout: fixed; border-spacing: 0; }
.col-label { width: 36%; }
.col-end { width: 74px; }
td { padding: 16px; border-top: 2px solid #dcdcdc; vertical-align: top; }
.last td { border-bottom: 2px solid #dcdcdc; padding-bottom: 56px; }
.actions td { border-top: 0; text-align: right; }
td > * { display: block; }
label { width: max-content; max-width: 100%; line-height: 46px; }
.strong { font-weight: 700; }

.field {
  width: 346px;
  height: 54px;
  margin: 1px 0;
  padding: 0 4px;
  border: 2px solid #cbcbcb;
  background: #fff;
  font: 32px "Liberation Sans", Arial, sans-serif;
  color: #000;
}
.filled {
  height: 56px;
  margin: 0;
  border-color: #7f7f7f #c4c4c4 #dadada;
  border-top-width: 3px;
  background: #e8effd;
}
.picker { position: relative; width: max-content; }
.picker select {
  appearance: none;
  display: block;
  height: 46px;
  padding: 0 16px;
  border: 2px solid #a3a3a3;
  border-radius: 10px;
  background: #f7f7f7;
  font: 32px "Liberation Sans", Arial, sans-serif;
  color: #333;
}
.country { width: 250px; }
.city { width: 234px; }
.arrows { position: absolute; right: 9px; top: 8px; pointer-events: none; }
.skills {
  width: 228px;
  height: 158px;
  padding: 0;
  border: 2px solid #999;
  border-radius: 0;
  background: #fff;
  overflow: hidden;
  scrollbar-width: none;
  font: 32px "Liberation Sans", Arial, sans-serif;
  color: #333;
}
.skills option { padding: 0 4px; height: 38px; line-height: 38px; }
.file {
  width: 100%;
  height: 68px;
  padding: 9px 26px 15px;
  border: 2px solid #ccc;
  border-radius: 8px;
  box-shadow: inset 0 2px 2px #eee;
  font: 28px/40px "Liberation Sans", Arial, sans-serif;
  color: #555;
}
.file::file-selector-button {
  height: 36px;
  margin-right: 8px;
  padding: 0 14px;
  border: 1px solid #d0d0d0;
  border-bottom: 2px solid #bcbcbc;
  border-radius: 8px;
  background: #fff;
  font: 22px Inter, sans-serif;
  color: #222;
}
.primary {
  width: 142px;
  height: 68px;
  border: 2px solid #3c6ea5;
  border-radius: 8px;
  background: #4379b2;
  color: #fff;
  font-size: 28px;
}
.submit { margin-left: auto; }
.progress {
  height: 40px;
  border-radius: 8px;
  background: #73b566;
  box-shadow: inset 0 -2px 0 #5f9f53;
  color: #fff;
  font-size: 24px;
  line-height: 40px;
  text-align: center;
}

/* Dock */
.dock {
  flex: none;
  display: flex;
  height: 94px;
  margin: 2px 58px 0;
  padding: 0 7px;
  border-radius: 14px 14px 0 0;
  background: #655855;
  box-shadow: 0 0 80px rgba(0, 0, 0, .15);
  position: relative;
}
.app {
  position: relative;
  flex: 1;
  display: flex;
  flex-direction: column;
  align-items: center;
  gap: 2px;
  padding-top: 8px;
}
.app svg { width: 72px; height: 72px; }
.app.on::after, .launch::after {
  content: "";
  width: 8px;
  height: 8px;
  border-radius: 4px;
  background: #050505;
}
.launch::after { width: 72px; border: 2px solid #050505; background: none; }
.rule { width: 2px; height: 70px; margin: 12px 16px 0; background: #2b2322; }
.rule.short { height: 46px; margin-top: 24px; }
.badge {
  position: absolute;
  top: 2px;
  right: 0;
  width: 26px;
  height: 26px;
  border-radius: 50%;
  background: #e2483d;
  color: #fff;
  font-size: 16px;
  line-height: 26px;
  text-align: center;
}
.petals rect { mix-blend-mode: multiply; opacity: .9; }
.cal-month { font: 13px Inter, sans-serif; fill: #fff; }
.cal-day { font: 300 32px Inter, sans-serif; fill: #222; }
.three-d { font: 11px Inter, sans-serif; fill: #444; }
.pages { font: 700 11px Inter, sans-serif; fill: #fff; }
.prompt { font: 700 16px "Liberation Mono", monospace; fill: #fff; }
.imo { font: 700 26px "Open Sans", sans-serif; fill: #2f57a2; }
```
FILE: script.js
```
const chosen = new DataTransfer();
chosen.items.add(new File([""], "anjum.jpg", { type: "image/jpeg" }));
document.getElementById("file").files = chosen.files;
```
